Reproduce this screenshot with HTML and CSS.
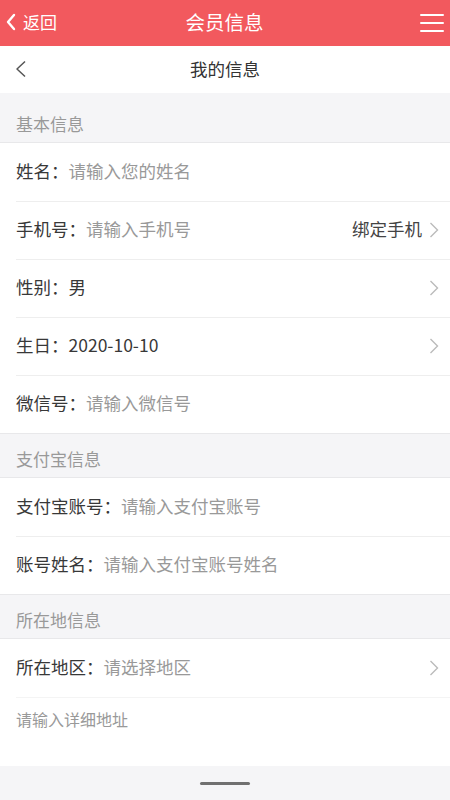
FILE: index.html
```
<!DOCTYPE html>
<html lang="zh-CN">
<head>
    <meta charset="UTF-8">
    <meta name="viewport" content="width=device-width, initial-scale=1.0">
    <title>会员信息</title>
    <link rel="stylesheet" href="styles.css">
</head>
<body>
    <header class="topbar">
        <a class="back-link">
            <svg width="12" height="18" viewBox="0 0 12 18"><polyline points="9,2 3,9 9,16" fill="none" stroke="#fff" stroke-width="2.4" stroke-linecap="round" stroke-linejoin="round"/></svg>
            <span>返回</span>
        </a>
        <h1>会员信息</h1>
        <div class="menu-icon">
            <span></span><span></span><span></span>
        </div>
    </header>

    <div class="subbar">
        <svg class="sub-back" width="12" height="18" viewBox="0 0 12 18"><polyline points="10,1.5 2,9 10,16.5" fill="none" stroke="#555" stroke-width="1.5" stroke-linejoin="round"/></svg>
        <h2>我的信息</h2>
    </div>

    <div class="section-title first">基本信息</div>
    <div class="group">
        <div class="row"><span class="label">姓名：</span><span class="hint">请输入您的姓名</span></div>
        <div class="row">
            <span class="label">手机号：</span><span class="hint">请输入手机号</span>
            <span class="extra">绑定手机</span>
            <svg class="arrow" width="10" height="16" viewBox="0 0 10 16"><polyline points="1.5,1 8.5,8 1.5,15" fill="none" stroke="#bbb" stroke-width="1.4"/></svg>
        </div>
        <div class="row">
            <span class="label">性别：</span><span class="value">男</span>
            <svg class="arrow push" width="10" height="16" viewBox="0 0 10 16"><polyline points="1.5,1 8.5,8 1.5,15" fill="none" stroke="#bbb" stroke-width="1.4"/></svg>
        </div>
        <div class="row">
            <span class="label">生日：</span><span class="value">2020-10-10</span>
            <svg class="arrow push" width="10" height="16" viewBox="0 0 10 16"><polyline points="1.5,1 8.5,8 1.5,15" fill="none" stroke="#bbb" stroke-width="1.4"/></svg>
        </div>
        <div class="row"><span class="label">微信号：</span><span class="hint">请输入微信号</span></div>
    </div>

    <div class="section-title">支付宝信息</div>
    <div class="group">
        <div class="row"><span class="label">支付宝账号：</span><span class="hint">请输入支付宝账号</span></div>
        <div class="row"><span class="label">账号姓名：</span><span class="hint">请输入支付宝账号姓名</span></div>
    </div>

    <div class="section-title">所在地信息</div>
    <div class="group">
        <div class="row">
            <span class="label">所在地区：</span><span class="hint">请选择地区</span>
            <svg class="arrow push" width="10" height="16" viewBox="0 0 10 16"><polyline points="1.5,1 8.5,8 1.5,15" fill="none" stroke="#bbb" stroke-width="1.4"/></svg>
        </div>
        <div class="row address"><span class="hint">请输入详细地址</span></div>
    </div>

    <div class="home-bar"><span></span></div>
</body>
</html>
```

FILE: styles.css
```
/* Page */
body {
    margin: 0;
    background: #f5f5f7;
    font-family: "Noto Sans CJK SC", "Liberation Sans", sans-serif;
    color: #333;
}

/* Red top bar */
.topbar {
    height: 46px;
    box-sizing: border-box;
    padding: 0 6px 3px 5px;
    background: #f2595e;
    display: flex;
    align-items: center;
    justify-content: space-between;
    color: #fff;
}

.back-link {
    display: flex;
    align-items: center;
    gap: 6px;
    font-size: 17px;
    width: 80px;
}

.topbar h1 {
    margin: 0;
    font-size: 19.5px;
    font-weight: normal;
}

.menu-icon {
    width: 80px;
    padding-top: 2px;
    display: flex;
    flex-direction: column;
    align-items: flex-end;
    gap: 6px;
}

.menu-icon span {
    display: block;
    width: 24px;
    height: 2px;
    background: #fff;
    border-radius: 1px;
}

/* White sub header */
.subbar {
    height: 47px;
    box-sizing: border-box;
    padding-bottom: 2px;
    background: #fff;
    display: flex;
    align-items: center;
    justify-content: center;
    position: relative;
}

.sub-back {
    position: absolute;
    left: 15px;
    top: 14px;
}

.subbar h2 {
    margin: 0;
    font-size: 17.5px;
    font-weight: normal;
    color: #333;
}

/* Section headers */
.section-title {
    height: 24px;
    line-height: 24px;
    padding: 13px 16px 6px;
    font-size: 17px;
    color: #999;
    border-top: 1px solid #e8e8ea;
    border-bottom: 1px solid #e8e8ea;
}

.section-title.first {
    padding-top: 19px;
    border-top: none;
}

/* Rows */
.group {
    background: #fff;
}

.row {
    height: 58px;
    box-sizing: border-box;
    padding-bottom: 4px;
    margin-left: 16px;
    padding-right: 11px;
    display: flex;
    align-items: center;
    font-size: 17.5px;
}

.row + .row {
    border-top: 1px solid #eeeeee;
}

.label {
    color: #383838;
}

.hint {
    color: #999;
}

.value {
    color: #383838;
}

.extra {
    margin-left: auto;
    margin-right: 7px;
    color: #444;
}

.push {
    margin-left: auto;
}

.arrow {
    margin-top: 3px;
}

.row.address {
    height: 69px;
    align-items: flex-start;
    padding-top: 9px;
    border-top-color: #f4f4f4;
    font-size: 16px;
}

/* Home indicator */
.home-bar {
    height: 35px;
    display: flex;
    align-items: center;
    justify-content: center;
}

.home-bar span {
    display: block;
    width: 50px;
    height: 3px;
    border-radius: 2px;
    background: #707070;
}
```
